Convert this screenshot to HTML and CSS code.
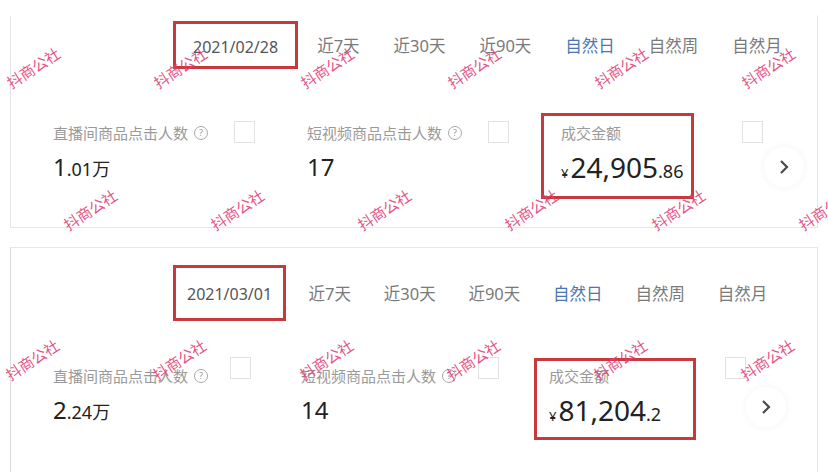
FILE: index.html
```html
<!DOCTYPE html>
<html lang="zh-CN">
<head>
  <meta charset="utf-8">
  <title>数据概览</title>
  <link rel="stylesheet" href="styles.css">
</head>
<body>
  <!-- 2021/02/28 -->
  <div class="panel panel-top">
    <div class="tabs">
      <span class="date">2021/02/28</span>
      <span class="tab first">近7天</span>
      <span class="tab">近30天</span>
      <span class="tab">近90天</span>
      <span class="tab active">自然日</span>
      <span class="tab">自然周</span>
      <span class="tab">自然月</span>
    </div>
    <div class="metrics">
      <div class="metric">
        <div class="metric-body">
          <div class="label">直播间商品点击人数<span class="help">?</span></div>
          <div class="value"><span class="big">1</span><span class="small">.01万</span></div>
        </div>
        <span class="check"></span>
      </div>
      <div class="metric">
        <div class="metric-body">
          <div class="label">短视频商品点击人数<span class="help">?</span></div>
          <div class="value"><span class="big">17</span></div>
        </div>
        <span class="check"></span>
      </div>
      <div class="metric last">
        <div class="metric-body marked">
          <div class="label">成交金额</div>
          <div class="value money"><span class="yen">¥</span><span class="big">24,905</span><span class="small">.86</span></div>
        </div>
        <span class="check"></span>
      </div>
      <div class="next">
        <svg width="10" height="16" viewBox="0 0 10 16"><path d="M2 2 L8 8 L2 14" fill="none" stroke="#4a4a4a" stroke-width="2.2"/></svg>
      </div>
    </div>
  </div>

  <!-- 2021/03/01 -->
  <div class="panel panel-bottom">
    <div class="tabs">
      <span class="date">2021/03/01</span>
      <span class="tab first">近7天</span>
      <span class="tab">近30天</span>
      <span class="tab">近90天</span>
      <span class="tab active">自然日</span>
      <span class="tab">自然周</span>
      <span class="tab">自然月</span>
    </div>
    <div class="metrics">
      <div class="metric">
        <div class="metric-body">
          <div class="label">直播间商品点击人数<span class="help">?</span></div>
          <div class="value"><span class="big">2</span><span class="small">.24万</span></div>
        </div>
        <span class="check"></span>
      </div>
      <div class="metric">
        <div class="metric-body">
          <div class="label">短视频商品点击人数<span class="help">?</span></div>
          <div class="value"><span class="big">14</span></div>
        </div>
        <span class="check"></span>
      </div>
      <div class="metric last">
        <div class="metric-body marked">
          <div class="label">成交金额</div>
          <div class="value money"><span class="yen">¥</span><span class="big">81,204</span><span class="small">.2</span></div>
        </div>
        <span class="check"></span>
      </div>
      <div class="next">
        <svg width="10" height="16" viewBox="0 0 10 16"><path d="M2 2 L8 8 L2 14" fill="none" stroke="#4a4a4a" stroke-width="2.2"/></svg>
      </div>
    </div>
  </div>

  <!-- 水印 -->
  <div class="wm-row row-1">
    <span class="wm">抖商公社</span><span class="wm">抖商公社</span><span class="wm">抖商公社</span>
    <span class="wm">抖商公社</span><span class="wm">抖商公社</span><span class="wm">抖商公社</span>
  </div>
  <div class="wm-row row-2">
    <span class="wm">抖商公社</span><span class="wm">抖商公社</span><span class="wm">抖商公社</span>
    <span class="wm">抖商公社</span><span class="wm">抖商公社</span><span class="wm">抖商公社</span>
  </div>
  <div class="wm-row row-3">
    <span class="wm">抖商公社</span><span class="wm">抖商公社</span><span class="wm">抖商公社</span>
    <span class="wm">抖商公社</span><span class="wm">抖商公社</span><span class="wm">抖商公社</span>
  </div>
</body>
</html>
```

FILE: styles.css
```css
body {
  margin: 0;
  width: 828px;
  height: 472px;
  overflow: hidden;
  position: relative;
  background-color: #fff;
  font-family: "Noto Sans", "Noto Sans CJK SC", sans-serif;
  color: #333;
}

.panel {
  margin-left: 10px;
  width: 806px;
  border: 1px solid #e6e6e6;
}

.panel-top {
  margin-top: 15px;
  height: 211px;
  border-top-color: transparent;
}

.panel-bottom {
  margin-top: 19px;
  height: 240px;
  border-left-color: #dcdcdc;
}

/* 日期 / 时间段切换 */
.tabs {
  display: flex;
  align-items: center;
  padding-left: 162px;
}

.panel-top .tabs {
  padding-top: 5px;
}

.panel-bottom .tabs {
  padding-top: 17px;
}

.date {
  border: 3px solid #c8393d;
  font-size: 16px;
  color: #555;
  white-space: nowrap;
}

.panel-top .date {
  height: 42px;
  line-height: 47px;
  padding: 0 17px;
}

.panel-bottom .date {
  height: 50px;
  line-height: 52px;
  padding: 0 11px;
}

.tab {
  padding: 0 17px;
  font-size: 16.5px;
  color: #7a7a7a;
  white-space: nowrap;
}

.panel-top .tab.first {
  margin-left: 2px;
}

.panel-bottom .tab {
  padding: 0 16.4px;
}

.panel-bottom .tab.first {
  margin-left: 6px;
}

.tab.active {
  color: #4b76b3;
}

/* 指标 */
.metrics {
  display: flex;
  align-items: flex-start;
  padding-left: 42px;
}

.panel-top .metrics {
  margin-top: 54px;
}

.panel-bottom .metrics {
  margin-top: 45px;
}

.metric {
  display: flex;
  align-items: flex-start;
  width: 254px;
}

.metric-body {
  width: 181px;
}

.panel-bottom .metric {
  width: 248px;
}

.panel-bottom .metric-body {
  width: 177px;
}

.panel-top .metric.last {
  width: 203px;
}

.panel-bottom .metric.last {
  width: 197px;
}

.check {
  width: 19px;
  height: 20px;
  border: 1px solid #e2e2e2;
  margin-top: -2px;
  flex: none;
}

.panel-bottom .check {
  margin-top: -9px;
}

.label {
  display: flex;
  align-items: center;
  font-size: 15px;
  line-height: 20px;
  color: #9a9a9a;
  white-space: nowrap;
}

.help {
  width: 12px;
  height: 12px;
  margin-left: 6px;
  border: 1px solid #a8a8a8;
  border-radius: 50%;
  font-size: 9px;
  line-height: 12px;
  text-align: center;
  color: #999;
}

.value {
  margin-top: 7px;
  line-height: 34px;
  color: #222;
  white-space: nowrap;
}

.value .big {
  font-size: 24px;
}

.value .small {
  font-size: 18px;
}

.money .big {
  font-size: 28px;
}

.money .yen {
  font-size: 13px;
  margin-right: 2px;
}

/* 标注红框 */
.marked {
  position: relative;
}

.marked::after {
  content: "";
  position: absolute;
  box-sizing: border-box;
  border: 3px solid #c8393d;
}

.panel-top .marked::after {
  left: -20px;
  top: -10px;
  width: 153px;
  height: 86px;
}

.panel-bottom .marked::after {
  left: -15px;
  top: -8px;
  width: 162px;
  height: 82px;
}

.next {
  width: 40px;
  height: 40px;
  border-radius: 50%;
  box-shadow: 0 0 10px rgba(0, 0, 0, 0.05);
  display: flex;
  align-items: center;
  justify-content: center;
  flex: none;
}

.panel-top .next {
  margin-top: 24px;
}

.panel-bottom .next {
  margin-top: 21px;
}

/* 水印 */
.wm-row {
  position: absolute;
  display: flex;
  gap: 87px;
  pointer-events: none;
}

.row-1 {
  left: 3px;
  top: 59px;
}

.row-2 {
  left: 60px;
  top: 201px;
}

.row-3 {
  left: 2px;
  top: 351px;
}

.wm {
  width: 60px;
  flex: none;
  font-family: "Noto Sans CJK SC", sans-serif;
  font-size: 15px;
  line-height: 17px;
  color: #e0437a;
  opacity: 0.9;
  white-space: nowrap;
  transform: rotate(-33deg);
}
```
